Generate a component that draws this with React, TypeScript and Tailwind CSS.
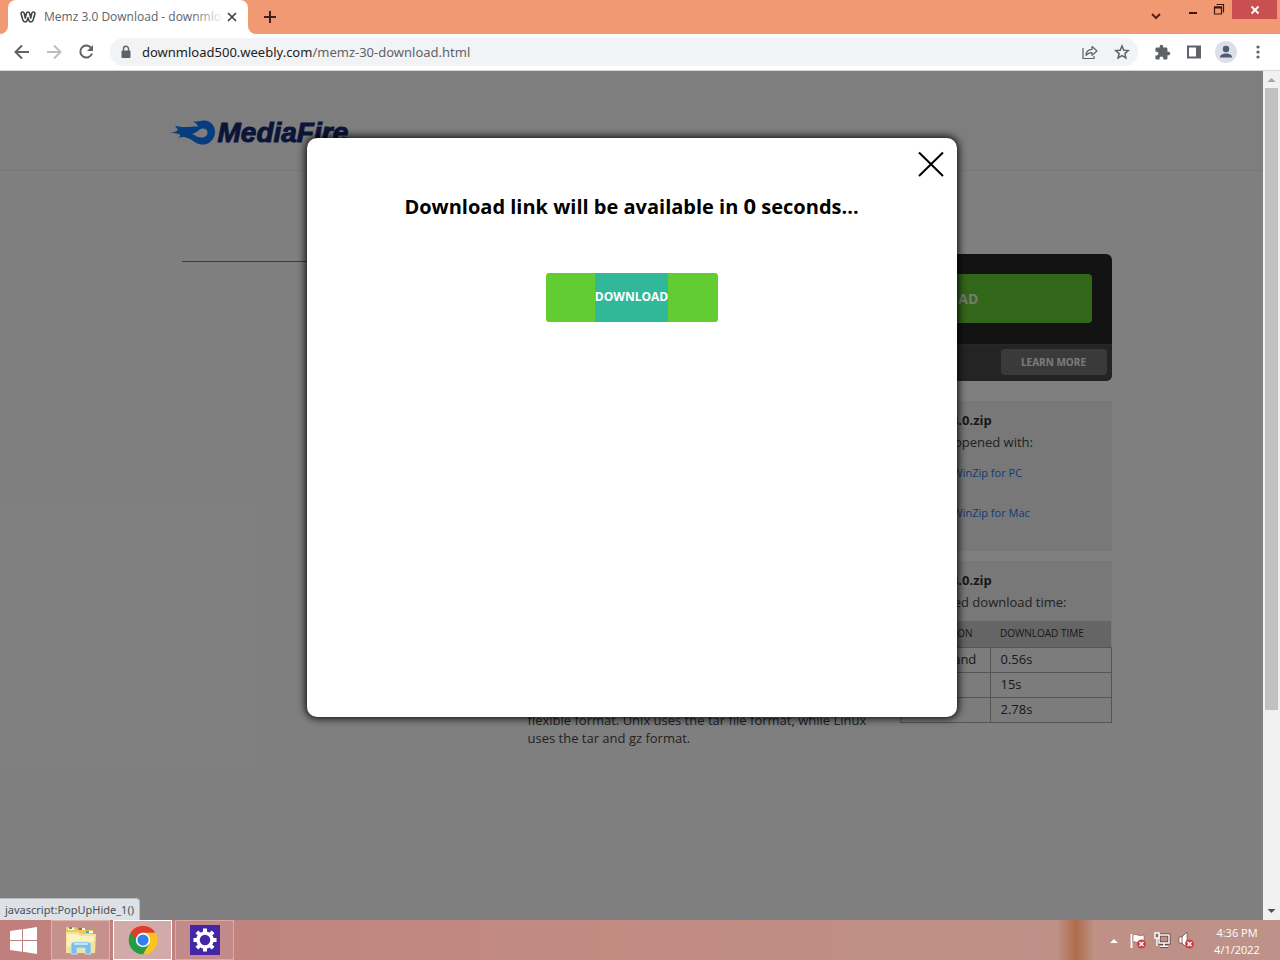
import type { ReactNode } from 'react';

const rows = [
  { connection: 'Broadband', time: '0.56s' },
  { connection: 'Dialup', time: '15s' },
  { connection: 'DSL', time: '2.78s' },
];

function IconButton({ label, children }: { label: string; children: ReactNode }) {
  return (
    <button type="button" aria-label={label} className="flex size-8 shrink-0 items-center justify-center rounded-full text-[#5f6368]">
      {children}
    </button>
  );
}

function TabStrip() {
  return (
    <header className="flex h-[34px] items-start bg-[#f19972] pl-2">
      <div className="relative flex h-[34px] w-60 items-center rounded-t-lg bg-white pl-3 pr-2">
        <svg className="absolute -left-2 bottom-0 size-2" viewBox="0 0 8 8" aria-hidden="true">
          <path d="M8 0v8H0a8 8 0 0 0 8-8z" fill="#fff" />
        </svg>
        <svg className="absolute -right-2 bottom-0 size-2" viewBox="0 0 8 8" aria-hidden="true">
          <path d="M0 0v8h8a8 8 0 0 1-8-8z" fill="#fff" />
        </svg>
        <svg className="size-4 shrink-0" viewBox="0 0 16 16" aria-hidden="true">
          <path d="M1 4.500Q1 3 2.500 3T4.300 4.500L5.300 9L6.300 4.800Q6.700 3 8 3T9.700 4.800L10.700 9L11.700 4.500Q12 3 13.500 3T15 4.500L13.200 10.800Q12.500 13 10.900 13T8.700 11L8 8.800L7.300 11Q6.700 13 5.100 13T2.800 10.800Z" fill="none" stroke="#43464a" strokeWidth="1.600" strokeLinejoin="round" />
        </svg>
        <span className="relative ml-2 flex-1 overflow-hidden whitespace-nowrap text-[12px] leading-4 text-[#5f6368]">
          Memz 3.0 Download - downmload
          <span className="absolute inset-y-0 right-0 w-8 bg-linear-to-r from-transparent to-white" />
        </span>
        <button type="button" aria-label="Close tab" className="flex size-4 items-center justify-center">
          <svg className="size-4" viewBox="0 0 16 16"><path d="M4 4l8 8M12 4l-8 8" stroke="#3c4043" strokeWidth="1.700" /></svg>
        </button>
      </div>
      <button type="button" aria-label="New tab" className="ml-3 flex h-[34px] w-5 items-center justify-center">
        <svg className="size-4" viewBox="0 0 16 16"><path d="M8 2v12M2 8h12" stroke="#40211a" strokeWidth="2" /></svg>
      </button>
      <div className="ml-auto flex h-[34px] items-start">
        <button type="button" aria-label="Search tabs" className="flex h-8 w-6 items-center justify-center">
          <svg className="size-4" viewBox="0 0 16 16"><path d="M4 6l4 4 4-4" fill="none" stroke="#5a2013" strokeWidth="2" /></svg>
        </button>
        <button type="button" aria-label="Minimize" className="ml-3 flex h-[19px] w-[26px] items-center justify-center">
          <svg className="size-4" viewBox="0 0 16 16"><path d="M4 10h8v2H4z" fill="#3f160b" /></svg>
        </button>
        <button type="button" aria-label="Restore" className="flex h-[19px] w-[26px] items-center justify-center">
          <svg className="size-4" viewBox="0 0 16 16"><path d="M3.500 5h7v7h-7zM5.500 2.500h7v8" fill="none" stroke="#3f160b" strokeWidth="1.200" /><path d="M3 4.500h8v2H3z" fill="#3f160b" /></svg>
        </button>
        <button type="button" aria-label="Close window" className="mr-[3px] flex h-[19px] w-[45px] items-center justify-center bg-[#c94f50]">
          <svg className="size-4" viewBox="0 0 16 16"><path d="M4.500 4.500l7 7M11.500 4.500l-7 7" stroke="#fff" strokeWidth="1.800" /></svg>
        </button>
      </div>
    </header>
  );
}

function Toolbar() {
  return (
    <nav aria-label="Browser toolbar" className="flex h-[37px] items-center border-b border-[#d5d7da] bg-white pl-[6px] pr-[6px]">
      <IconButton label="Back">
        <svg className="size-5" viewBox="0 0 20 20"><path d="M17 10H4M10 3.500L3.500 10l6.500 6.500" fill="none" stroke="currentColor" strokeWidth="2" /></svg>
      </IconButton>
      <IconButton label="Forward">
        <svg className="size-5" viewBox="0 0 20 20"><path d="M3 10h13M10 3.500l6.500 6.500-6.500 6.500" fill="none" stroke="#bcbec1" strokeWidth="2" /></svg>
      </IconButton>
      <IconButton label="Reload">
        <svg className="size-5" viewBox="0 0 20 20"><path d="M15.300 6.200A6 6 0 1 0 16 11.500" fill="none" stroke="currentColor" strokeWidth="2" /><path d="M17 3v6h-6z" fill="currentColor" /></svg>
      </IconButton>
      <div className="ml-2 flex h-7 flex-1 items-center rounded-full bg-[#f1f3f4] pl-2">
        <svg className="mr-2 h-4 w-4 shrink-0" viewBox="0 0 16 16" aria-hidden="true">
          <path d="M4.500 6.500h7q1 0 1 1v5.500q0 1-1 1h-7q-1 0-1-1V7.500q0-1 1-1z" fill="#5f6368" />
          <path d="M5.500 7V4.800a2.500 2.500 0 0 1 5 0V7" fill="none" stroke="#5f6368" strokeWidth="1.400" />
        </svg>
        <span className="flex-1 truncate font-['Noto_Sans',sans-serif] text-[13px] leading-5 text-[#202124]">
          downmload500.weebly.com<span className="text-[#5f6368]">/memz-30-download.html</span>
        </span>
        <IconButton label="Share">
          <svg className="size-4" viewBox="0 0 16 16"><path d="M1 4v10.500h11V12" fill="none" stroke="currentColor" strokeWidth="1.200" /><path d="M4 11.500C4.200 7.500 6.500 5.500 10 5.400V2.500l5 4.500-5 4.300V8.600C7.500 8.600 5.500 9.500 4 11.500z" fill="none" stroke="currentColor" strokeWidth="1.200" strokeLinejoin="round" /></svg>
        </IconButton>
        <IconButton label="Bookmark this page">
          <svg className="size-4" viewBox="0 0 16 16"><path d="M8 2l1.800 4.200 4.500.4-3.400 3 1 4.400L8 11.700 4.100 14l1-4.400-3.400-3 4.500-.4z" fill="none" stroke="currentColor" strokeWidth="1.500" strokeLinejoin="miter" /></svg>
        </IconButton>
      </div>
      <div className="ml-2 flex items-center">
        <IconButton label="Extensions">
          <svg className="size-[17px]" viewBox="0 0 24 24"><path fill="currentColor" d="M20.500 11H19V7c0-1.100-.9-2-2-2h-4V3.500a2.500 2.500 0 0 0-5 0V5H4c-1.100 0-2 .9-2 2v3.800h1.500a2.700 2.700 0 0 1 0 5.400H2V20c0 1.100.9 2 2 2h3.800v-1.500a2.700 2.700 0 0 1 5.400 0V22H17c1.100 0 2-.9 2-2v-4h1.500a2.500 2.500 0 0 0 0-5z" /></svg>
        </IconButton>
        <IconButton label="Side panel">
          <svg className="size-4" viewBox="0 0 16 16"><path d="M2 2.500h12v11H2z" fill="none" stroke="currentColor" strokeWidth="2" /><path d="M10 2h5v12h-5z" fill="currentColor" /></svg>
        </IconButton>
        <IconButton label="Profile">
          <svg className="size-[22px]" viewBox="0 0 22 22"><circle cx="11" cy="11" r="11" fill="#dadfe9" /><circle cx="11" cy="8" r="3.200" fill="#4f5b70" /><path d="M5 16.500c0-3 3-4 6-4s6 1 6 4z" fill="#4f5b70" /></svg>
        </IconButton>
        <IconButton label="Menu">
          <svg className="size-4" viewBox="0 0 16 16" fill="currentColor"><circle cx="8" cy="3" r="1.600" /><circle cx="8" cy="8" r="1.600" /><circle cx="8" cy="13" r="1.600" /></svg>
        </IconButton>
      </div>
    </nav>
  );
}

function SitePage() {
  return (
    <div className="min-w-0 flex-1 bg-white pb-[173px] text-[13px] text-black">
      <div className="h-[100px] border-b border-[#f0f0f0] bg-[#fdfdfd]">
        <div className="mx-auto flex max-w-[960px] items-center pl-[18px] pt-[49px]">
          <svg className="h-[26px] w-[46px] shrink-0" viewBox="0 0 46 26" aria-hidden="true">
            <path d="M0 13C4 12.500 6 11.500 8 10L5 5.500C12 8 19 6.500 28 6.500C27 4.500 26 3 23 1.500C28 2 31 0 35 .5C42 1.500 45.500 7 45 13C44.500 20 38 25.500 31 24.500C25 23.500 22 19 16 17.500C13 16.700 11 17 8 17.800C10 16.500 10.500 15.500 10 14.500C7 13 4 13 0 13ZM21 14C24 14 27 17.500 31 17.500C35 17.500 37.500 15.500 37.500 12.500C37.500 9.500 35 8 32 8.500C28 9.500 27 13.500 21 14Z" fill="#0c7bff" fillRule="evenodd" />
          </svg>
          <span className="ml-[2px] font-['Liberation_Sans',sans-serif] text-[28px] font-bold italic leading-[26px] text-[#162b70] [-webkit-text-stroke:1px_#162b70]">MediaFire</span>
        </div>
      </div>
      <div className="mx-auto max-w-[960px] pl-[30px] pt-[80px]">
        <div className="mt-[3px] flex items-start gap-5">
          <div className="mt-[7px] flex-1 border-t border-[#777]" />
          <section className="w-[352px] overflow-hidden rounded-md bg-[#262626]">
            <div className="border-b border-[#505050] px-5 pb-[21px] pt-5">
              <button type="button" className="h-[49px] w-full rounded-sm bg-[#64cc33] text-[14px] font-bold text-[#e8f8e0]">DOWNLOAD</button>
            </div>
            <div className="flex justify-end bg-[#484848] px-[5px] pb-[6px] pt-1">
              <button type="button" className="h-[26px] w-[106px] rounded-sm bg-[#747474] text-[10px] font-bold text-[#f4f4f4]">LEARN MORE</button>
            </div>
          </section>
        </div>
        <div className="mt-5 flex items-start">
          <article className="min-w-0 flex-1 pl-[346px] pr-5 pt-[310px]">
            <p className="leading-[18px] text-[#444]">flexible format. Unix uses the tar file format, while Linux uses the tar and gz format.</p>
          </article>
          <aside className="flex w-[212px] shrink-0 flex-col gap-[10px]">
            <section className="h-[150px] bg-[#f0f0f0] px-[9px] pt-2">
              <h2 className="font-bold leading-[22px] text-[#333]">Memz 3.0.zip</h2>
              <p className="leading-[22px] text-[#444]">Can be opened with:</p>
              <ul className="pl-11 text-[11px] leading-5">
                <li className="pt-[10px]"><a href="#pc" className="text-[#1a78ea]">WinZip for PC</a></li>
                <li className="pt-5"><a href="#mac" className="text-[#1a78ea]">WinZip for Mac</a></li>
              </ul>
            </section>
            <section className="bg-[#f0f0f0]">
              <h2 className="px-[9px] pt-2 font-bold leading-[22px] text-[#333]">Memz 3.0.zip</h2>
              <p className="px-[9px] pb-2 leading-[22px] text-[#444]">Estimated download time:</p>
              <table className="w-full border-collapse text-left text-[#333]">
                <thead className="bg-[#cacaca] text-[10px]">
                  <tr className="h-[26px]">
                    <th className="w-[90px] pl-2 font-normal">CONNECTION</th>
                    <th className="pl-[10px] font-normal">DOWNLOAD TIME</th>
                  </tr>
                </thead>
                <tbody className="bg-[#f8f8f8]">
                  {rows.map((row) => (
                    <tr key={row.connection} className="h-[25px]">
                      <td className="border border-[#aaa] pl-2">{row.connection}</td>
                      <td className="border border-[#aaa] pl-[10px]">{row.time}</td>
                    </tr>
                  ))}
                </tbody>
              </table>
            </section>
          </aside>
        </div>
      </div>
    </div>
  );
}

function DownloadDialog() {
  return (
    <div className="absolute inset-0 flex items-start justify-center bg-black/50 pt-[67px]">
      <div role="dialog" aria-label="Download" className="relative flex h-[579px] w-[650px] flex-col items-center rounded-[10px] bg-white shadow-[0_0_8px_1px_#000]">
        <button type="button" aria-label="Close" className="absolute right-3 top-3 flex size-7 items-center justify-center">
          <svg className="size-7" viewBox="0 0 28 28"><path d="M2 2.500l24 23.500M26 2.500L2 26" stroke="#000" strokeWidth="2" /></svg>
        </button>
        <h1 className="mt-[52px] text-[20px] font-bold leading-[30px] text-black">
          Download link will be available in <span className="text-[22px]">0</span> seconds...
        </h1>
        <button type="button" className="mt-[51px] flex h-[49px] w-[172px] justify-center rounded-[3px] bg-[#64cc33] text-[12px] font-bold leading-[47px] text-white">
          <span className="h-[49px] bg-[#31b898]">DOWNLOAD</span>
        </button>
      </div>
    </div>
  );
}

function Scrollbar() {
  return (
    <div aria-hidden="true" className="flex w-[17px] shrink-0 flex-col items-center bg-[#f1f1f1]">
      <svg className="h-[17px] w-[17px] shrink-0" viewBox="0 0 17 17"><path d="M4.500 11l4-4 4 4z" fill="#a3a3a3" /></svg>
      <div className="w-[13px] grow-[622] bg-[#c1c1c1]" />
      <div className="grow-[193]" />
      <svg className="h-[17px] w-[17px] shrink-0" viewBox="0 0 17 17"><path d="M4.500 6l4 4 4-4z" fill="#505050" /></svg>
    </div>
  );
}

function Taskbar() {
  return (
    <footer className="flex h-10 items-stretch bg-linear-to-r from-[#c07f7c] from-0% via-[#c18c83] via-50% to-[#bd9288] to-100%">
      <button type="button" aria-label="Start" className="flex w-[51px] items-center pl-[10px]">
        <svg className="h-[27px] w-[27px]" viewBox="0 0 27 27" fill="#fff"><path d="M0 4l12-1.700v10.700H0zM13 2.200L27 0v13H13zM0 14h12v10.700L0 23zM13 14h14v13L13 24.800z" /></svg>
      </button>
      <button type="button" aria-label="File Explorer" className="mr-[3px] flex w-[59px] items-center justify-center border border-[#dcb3af] bg-[#c6918d]">
        <svg className="h-[30px] w-[34px]" viewBox="0 0 34 30">
          <path d="M2 2h10l2 3h15v5H2z" fill="#e8c965" />
          <path d="M4 3h6v2H4zM15 3h6v2h-6zM22 6h7v2h-7z" fill="#fffbe8" />
          <path d="M5 2h3v2H5z" fill="#63994c" /><path d="M15 3h3v2h-3z" fill="#b3623e" /><path d="M22 6h3v2h-3z" fill="#48a4cf" />
          <path d="M2 7h12l2 2h16l-1 19H2z" fill="#f5e39a" /><path d="M3 9h11l2 2h14v5L3 22z" fill="#fff3bd" />
          <path d="M7 29V20q0-3 3-3h14q3 0 3 3v9h-6v-6H13v6z" fill="#78bfe8" stroke="#b9e4f7" strokeWidth="1" /><path d="M10 19h14" stroke="#d8f2fc" strokeWidth="1.500" />
        </svg>
      </button>
      <button type="button" aria-label="Google Chrome" className="mr-[3px] flex w-[59px] items-center justify-center border border-white bg-[#d0abaa]">
        <svg className="size-[30px]" viewBox="0 0 48 48">
          <circle cx="24" cy="24" r="23" fill="#f9c51c" />
          <path d="M4.100 12.500A23 23 0 0 0 24 47L34 29.700 24 24V12.500z" fill="#269b48" />
          <path d="M4.100 12.500A23 23 0 0 1 43.900 12.500H24a11.500 11.500 0 0 0-10 17.200z" fill="#df3c31" />
          <path d="M4.100 12.500L14 29.700V24z" fill="#269b48" />
          <circle cx="24" cy="24" r="11.500" fill="#fff" /><circle cx="24" cy="24" r="9" fill="#3180ed" />
        </svg>
      </button>
      <button type="button" aria-label="Settings" className="flex w-[59px] items-center justify-center border border-[#d9aaa6] bg-[#c28a88]">
        <svg className="size-[30px]" viewBox="0 0 30 30">
          <path d="M0 0h30v30H0z" fill="#4527a5" />
          <circle cx="15" cy="15" r="7" fill="none" stroke="#fff" strokeWidth="3.500" />
          <path d="M15 3.500v4M15 22.500v4M3.500 15h4M22.500 15h4M6.900 6.900l2.800 2.800M20.300 20.300l2.800 2.800M6.900 23.100l2.800-2.800M20.300 9.700l2.800-2.800" stroke="#fff" strokeWidth="4" />
        </svg>
      </button>
      <div className="flex-1" />
      <div className="w-9 bg-linear-to-r from-transparent via-[#b06c4c] to-transparent" />
      <div className="flex items-center">
        <button type="button" aria-label="Show hidden icons" className="ml-2 flex size-6 items-center justify-center">
          <svg className="size-4" viewBox="0 0 16 16"><path d="M4 11l4-4 4 4z" fill="#fff" /></svg>
        </button>
        <button type="button" aria-label="Action Center" className="flex size-6 items-center justify-center">
          <svg className="size-[18px]" viewBox="0 0 18 18"><path d="M2.500 3v14" stroke="#fff" strokeWidth="1.800" /><path d="M4 4c3-2 5 2 11 0v7c-5 2-8-1-11 0z" fill="#fff" stroke="#6e4541" strokeWidth=".5" /><circle cx="12.500" cy="13" r="4.500" fill="#d63c44" /><path d="M10.500 11l4 4m0-4l-4 4" stroke="#fff" strokeWidth="1.500" /></svg>
        </button>
        <button type="button" aria-label="Network" className="flex size-6 items-center justify-center">
          <svg className="size-[18px]" viewBox="0 0 18 18"><path d="M6 4h10v8H6zM11 12v3M7 15.200h8" fill="none" stroke="#5b3532" strokeWidth="3" /><path d="M6 4h10v8H6zM11 12v3M7 15.200h8" fill="none" stroke="#fff" strokeWidth="1.500" /><path d="M2 2h4v5H2zM4 7v8" fill="#8f6460" stroke="#fff" strokeWidth="1.400" /></svg>
        </button>
        <button type="button" aria-label="Volume" className="flex size-6 items-center justify-center">
          <svg className="size-[18px]" viewBox="0 0 18 18"><path d="M2 6h3l5-5v16l-5-5H2z" fill="#fff" stroke="#6e4541" strokeWidth=".7" /><path d="M5 6v6" stroke="#8f6460" /><circle cx="12.500" cy="13" r="4.500" fill="#d63c44" /><path d="M10.500 11l4 4m0-4l-4 4" stroke="#fff" strokeWidth="1.500" /></svg>
        </button>
        <div className="mr-1 w-[78px] pt-[2px] text-center text-[11px] leading-[17px] text-white">
          <div>4:36 PM</div>
          <div>4/1/2022</div>
        </div>
      </div>
    </footer>
  );
}

export default function App() {
  return (
    <div className="flex min-h-screen flex-col bg-white font-['Open_Sans','Noto_Sans',sans-serif]">
      <TabStrip />
      <Toolbar />
      <div className="flex flex-1">
        <main className="relative flex min-w-0 flex-1">
          <SitePage />
          <DownloadDialog />
          <div className="absolute bottom-0 left-0 rounded-tr border-r border-t border-[#b9bcc0] bg-[#dee1e6] px-[5px] py-[2px] font-['Noto_Sans',sans-serif] text-[11px] leading-[17px] text-[#4b4f54]">
            javascript:PopUpHide_1()
          </div>
        </main>
        <Scrollbar />
      </div>
      <Taskbar />
    </div>
  );
}
